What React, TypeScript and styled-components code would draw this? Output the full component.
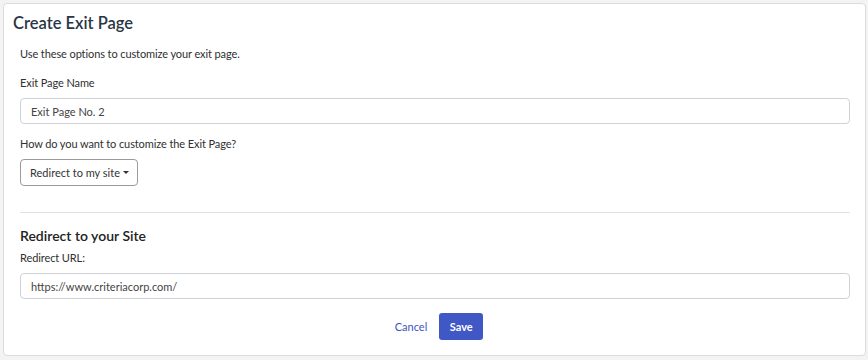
import React from "react";
import styled, { createGlobalStyle } from "styled-components";

const GlobalStyle = createGlobalStyle`
  body {
    margin: 0;
    background: #f3f3f3;
    font-family: Lato, "Open Sans", sans-serif;
  }
`;

const Page = styled.div`
  padding: 3px 2px 4px 3px;
  width: 868px;
  height: 360px;
  box-sizing: border-box;
`;

const Card = styled.div`
  background: #ffffff;
  border: 1px solid #dcdcdc;
  border-radius: 4px;
  height: 100%;
  box-sizing: border-box;
  padding: 9px 15px 0 9px;
`;

const Title = styled.h1`
  margin: 0 0 14px 0;
  font-size: 16.5px;
  font-weight: 600;
  color: #2a3645;
  line-height: 20px;
`;

const Body = styled.div`
  padding-left: 7px;
  display: flex;
  flex-direction: column;
`;

const Text = styled.p<{ $mb?: number; $mt?: number }>`
  margin: ${(p) => p.$mt ?? 0}px 0 ${(p) => p.$mb ?? 0}px 0;
  font-size: 11px;
  line-height: 14px;
  color: #2f2f2f;
  letter-spacing: -0.1px;
`;

const Field = styled.div`
  height: 26px;
  box-sizing: border-box;
  border: 1px solid #ced2d8;
  border-radius: 4px;
  padding: 0 10px;
  display: flex;
  align-items: center;
  font-size: 11px;
  color: #444;
`;

const Dropdown = styled.button`
  align-self: flex-start;
  height: 27px;
  box-sizing: border-box;
  border: 1px solid #9a9a9a;
  border-radius: 4px;
  background: #fff;
  padding: 0 8px 0 9px;
  display: flex;
  align-items: center;
  gap: 3px;
  font-family: inherit;
  font-size: 11px;
  color: #333;
`;

const Caret = styled.span`
  width: 0;
  height: 0;
  border-left: 3px solid transparent;
  border-right: 3px solid transparent;
  border-top: 3px solid #333;
  margin-top: -1px;
`;

const Divider = styled.hr`
  margin: 26px 0 14px 0;
  border: none;
  border-top: 1px solid #e2e2e2;
`;

const Subtitle = styled.h2`
  margin: 0 0 6px 0;
  font-size: 14px;
  font-weight: 600;
  color: #222;
  line-height: 18px;
`;

const Actions = styled.div`
  display: flex;
  justify-content: center;
  align-items: center;
  gap: 12px;
  margin: 14px 0 0 8px;
`;

const LinkButton = styled.button`
  border: none;
  background: none;
  padding: 0;
  font-family: inherit;
  font-size: 11px;
  color: #3a55c0;
`;

const PrimaryButton = styled.button`
  width: 44px;
  height: 27px;
  border: none;
  border-radius: 3px;
  background: #3f58c6;
  color: #fff;
  font-family: inherit;
  font-size: 11px;
  font-weight: 700;
`;

export default function App() {
  return (
    <>
      <GlobalStyle />
      <Page>
        <Card>
          <Title>Create Exit Page</Title>
          <Body>
            <Text $mb={15}>Use these options to customize your exit page.</Text>
            <Text $mb={8}>Exit Page Name</Text>
            <Field>Exit Page No. 2</Field>
            <Text $mt={13} $mb={8}>
              How do you want to customize the Exit Page?
            </Text>
            <Dropdown>
              Redirect to my site <Caret />
            </Dropdown>
            <Divider />
            <Subtitle>Redirect to your Site</Subtitle>
            <Text $mb={8}>Redirect URL:</Text>
            <Field>https://www.criteriacorp.com/</Field>
            <Actions>
              <LinkButton>Cancel</LinkButton>
              <PrimaryButton>Save</PrimaryButton>
            </Actions>
          </Body>
        </Card>
      </Page>
    </>
  );
}
